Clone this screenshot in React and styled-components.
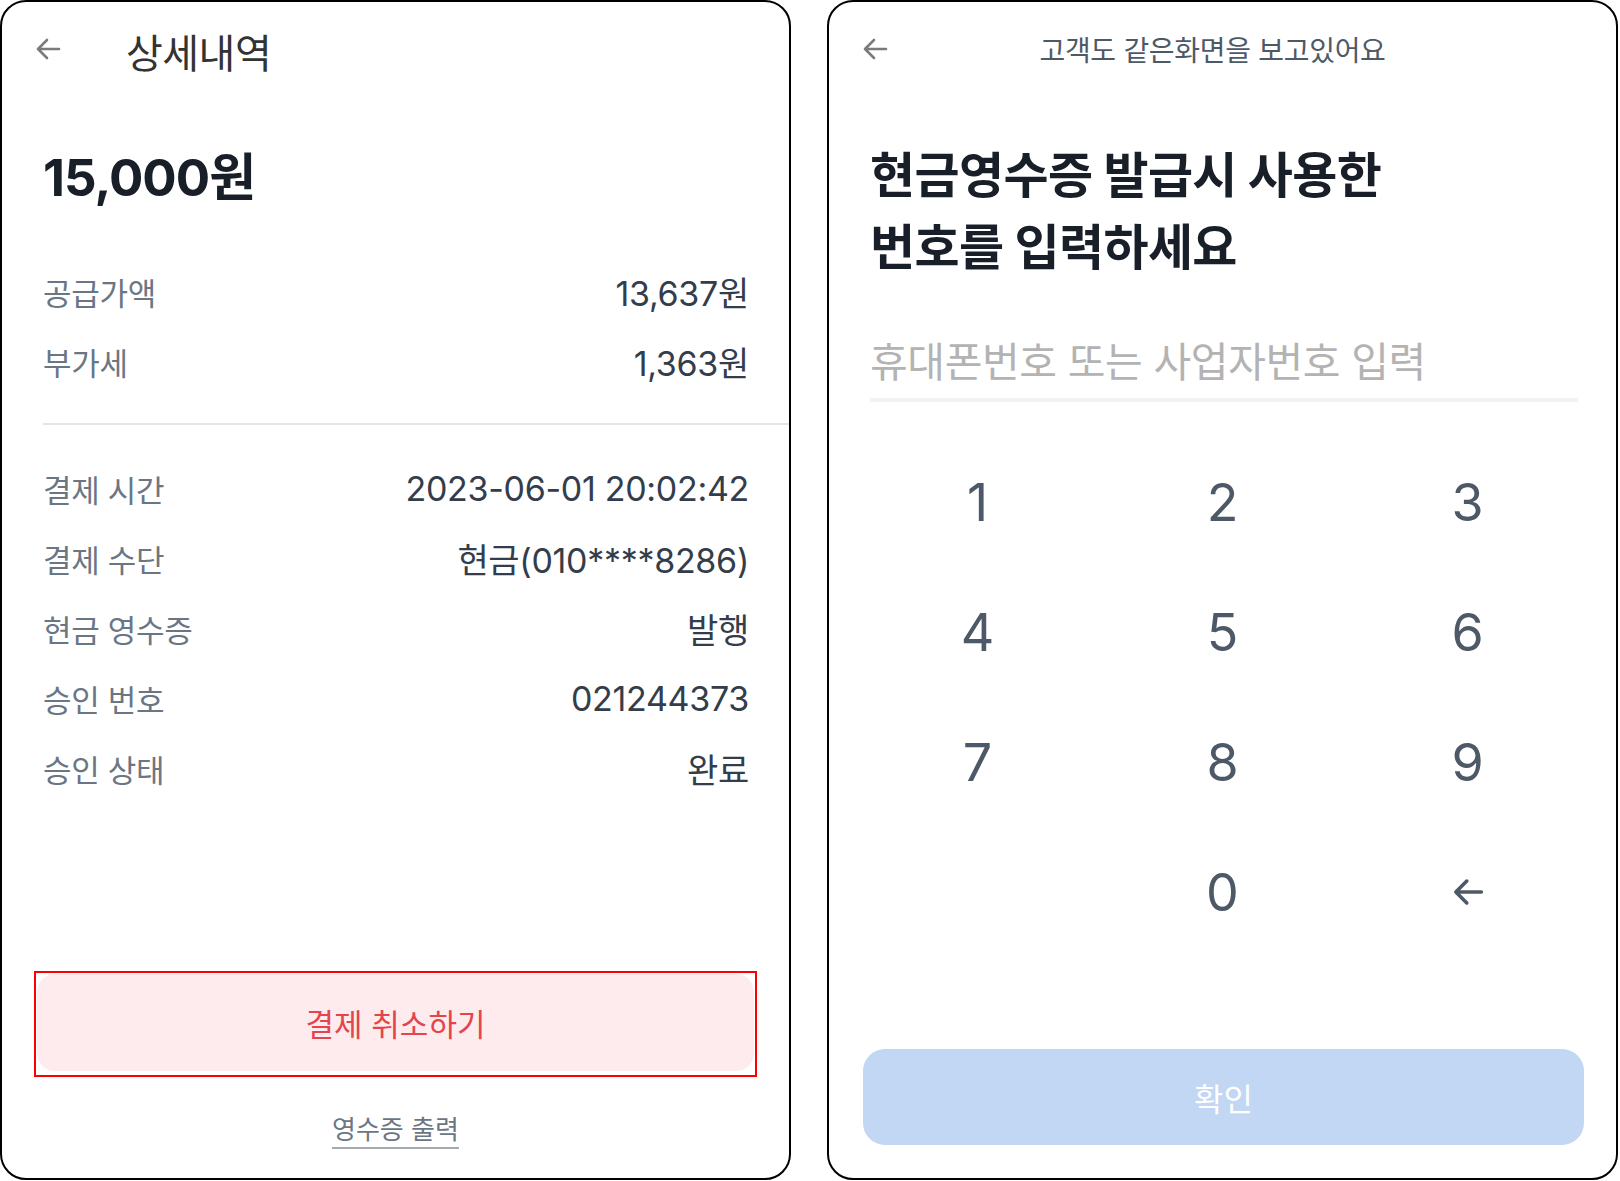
import React from 'react'
import styled, { createGlobalStyle } from 'styled-components'

const GlobalStyle = createGlobalStyle`
  html, body {
    margin: 0;
    padding: 0;
    background: #ffffff;
  }
  body {
    font-family: Inter, "Noto Sans CJK KR", "Noto Sans", sans-serif;
    color: #191f28;
  }
`

const summary = [
  { label: '공급가액', value: '13,637원' },
  { label: '부가세', value: '1,363원' }
]

const details = [
  { label: '결제 시간', value: '2023-06-01 20:02:42' },
  { label: '결제 수단', value: '현금(010****8286)' },
  { label: '현금 영수증', value: '발행' },
  { label: '승인 번호', value: '021244373' },
  { label: '승인 상태', value: '완료' }
]

const keys = ['1', '2', '3', '4', '5', '6', '7', '8', '9', '', '0', 'back']

const ArrowLeft = ({ size = 28, color = '#7b7b7b', stroke = 2.6 }) => (
  <svg width={size} height={size} viewBox="0 0 28 28" fill="none">
    <path
      d="M25 14H4M13 5L4 14l9 9"
      stroke={color}
      strokeWidth={stroke}
      strokeLinecap="round"
      strokeLinejoin="round"
    />
  </svg>
)

const App = () => (
  <Page>
    <GlobalStyle />

    {/* 상세내역 */}
    <Panel>
      <DetailHeader>
        <BackButton><ArrowLeft /></BackButton>
        <Title>상세내역</Title>
      </DetailHeader>

      <Amount>15,000원</Amount>

      <Rows $top={48}>
        {summary.map(row => (
          <Row key={row.label}>
            <Label>{row.label}</Label>
            <Value>{row.value}</Value>
          </Row>
        ))}
      </Rows>

      <Divider />

      <Rows $top={28}>
        {details.map(row => (
          <Row key={row.label}>
            <Label>{row.label}</Label>
            <Value>{row.value}</Value>
          </Row>
        ))}
      </Rows>

      <Spacer />

      <CancelFrame>
        <CancelButton type="button">결제 취소하기</CancelButton>
      </CancelFrame>

      <ReceiptLink>영수증 출력</ReceiptLink>
    </Panel>

    {/* 현금영수증 번호 입력 */}
    <Panel>
      <InputHeader>
        <BackButton><ArrowLeft /></BackButton>
        <Subtitle>고객도 같은화면을 보고있어요</Subtitle>
      </InputHeader>

      <Heading>
        현금영수증 발급시 사용한
        <br />
        번호를 입력하세요
      </Heading>

      <NumberField>휴대폰번호 또는 사업자번호 입력</NumberField>

      <Keypad>
        {keys.map((key, i) => (
          <Key key={i} type="button" disabled={!key}>
            {key === 'back'
              ? <ArrowLeft size={34} color="#4e5968" stroke={3} />
              : key}
          </Key>
        ))}
      </Keypad>

      <Spacer />

      <ConfirmButton type="button">확인</ConfirmButton>
    </Panel>
  </Page>
)

const Page = styled.div`
  display: flex;
  gap: 36px;
  width: 1620px;
  height: 1181px;
  box-sizing: border-box;
`

const Panel = styled.section`
  width: 791px;
  height: 1180px;
  box-sizing: border-box;
  border: 2px solid #000;
  border-radius: 26px;
  display: flex;
  flex-direction: column;
  overflow: hidden;
  background: #fff;
`

const DetailHeader = styled.header`
  height: 94px;
  display: flex;
  align-items: center;
  gap: 64px;
  padding-left: 32px;
`

const InputHeader = styled.header`
  height: 94px;
  display: grid;
  grid-template-columns: 1fr auto 1fr;
  align-items: center;
  padding: 0 52px 0 32px;
`

const BackButton = styled.button`
  border: 0;
  padding: 0;
  background: none;
  display: flex;
  align-items: center;
  justify-self: start;
  cursor: pointer;
`

const Title = styled.h1`
  margin: 4px 0 0;
  font-size: 40px;
  font-weight: 400;
  color: #333;
  letter-spacing: -0.5px;
`

const Subtitle = styled.p`
  margin: 0;
  font-size: 28px;
  color: #4e5968;
  letter-spacing: -0.3px;
`

const Amount = styled.div`
  margin: 52px 0 0 41px;
  font-size: 51px;
  line-height: 60px;
  font-weight: 700;
  color: #191f28;
  letter-spacing: -1px;
`

const Rows = styled.div`
  display: flex;
  flex-direction: column;
  padding: 0 40px 0 41px;
  margin-top: ${p => p.$top}px;
`

const Row = styled.div`
  display: flex;
  justify-content: space-between;
  align-items: center;
  height: 70px;
`

const Label = styled.span`
  font-size: 31px;
  color: #6b7684;
  letter-spacing: -0.3px;
`

const Value = styled.span`
  font-size: 34px;
  color: #333d4b;
  letter-spacing: -0.3px;
`

const Divider = styled.hr`
  margin: 27px 0 0 41px;
  border: 0;
  height: 2px;
  background: #e2e5e9;
`

const Spacer = styled.div`
  flex: 1;
`

const CancelFrame = styled.div`
  margin: 0 32px;
  border: 2px solid #ff0000;
  padding: 1px 1px 4px;
`

const CancelButton = styled.button`
  width: 100%;
  height: 97px;
  border: 0;
  border-radius: 18px;
  background: #fdebed;
  color: #e5444d;
  font-family: inherit;
  font-size: 31px;
  cursor: pointer;
`

const ReceiptLink = styled.a`
  align-self: center;
  margin: 36px 0 29px;
  font-size: 26px;
  line-height: 34px;
  color: #6b7684;
  border-bottom: 2px solid #a5a9ae;
  cursor: pointer;
`

const Heading = styled.h2`
  margin: 44px 0 0 41px;
  font-size: 49px;
  line-height: 72px;
  font-weight: 700;
  color: #191f28;
  letter-spacing: -0.6px;
`

const NumberField = styled.div`
  margin: 53px 38px 0 41px;
  padding-bottom: 11px;
  border-bottom: 4px solid #f1f2f4;
  font-size: 41px;
  line-height: 50px;
  color: #b3b3b3;
  letter-spacing: -0.4px;
`

const Keypad = styled.div`
  display: grid;
  grid-template-columns: repeat(3, 245px);
  grid-auto-rows: 130px;
  justify-content: center;
  margin-top: 35px;
`

const Key = styled.button`
  border: 0;
  background: none;
  display: flex;
  align-items: center;
  justify-content: center;
  font-family: inherit;
  font-size: 52px;
  font-weight: 400;
  color: #4e5968;
  cursor: pointer;

  &:disabled {
    cursor: default;
  }
`

const ConfirmButton = styled.button`
  margin: 0 32px 33px 34px;
  height: 96px;
  border: 0;
  border-radius: 22px;
  background: #c1d7f3;
  color: #fff;
  font-family: inherit;
  font-size: 32px;
  cursor: pointer;
`

export default App
